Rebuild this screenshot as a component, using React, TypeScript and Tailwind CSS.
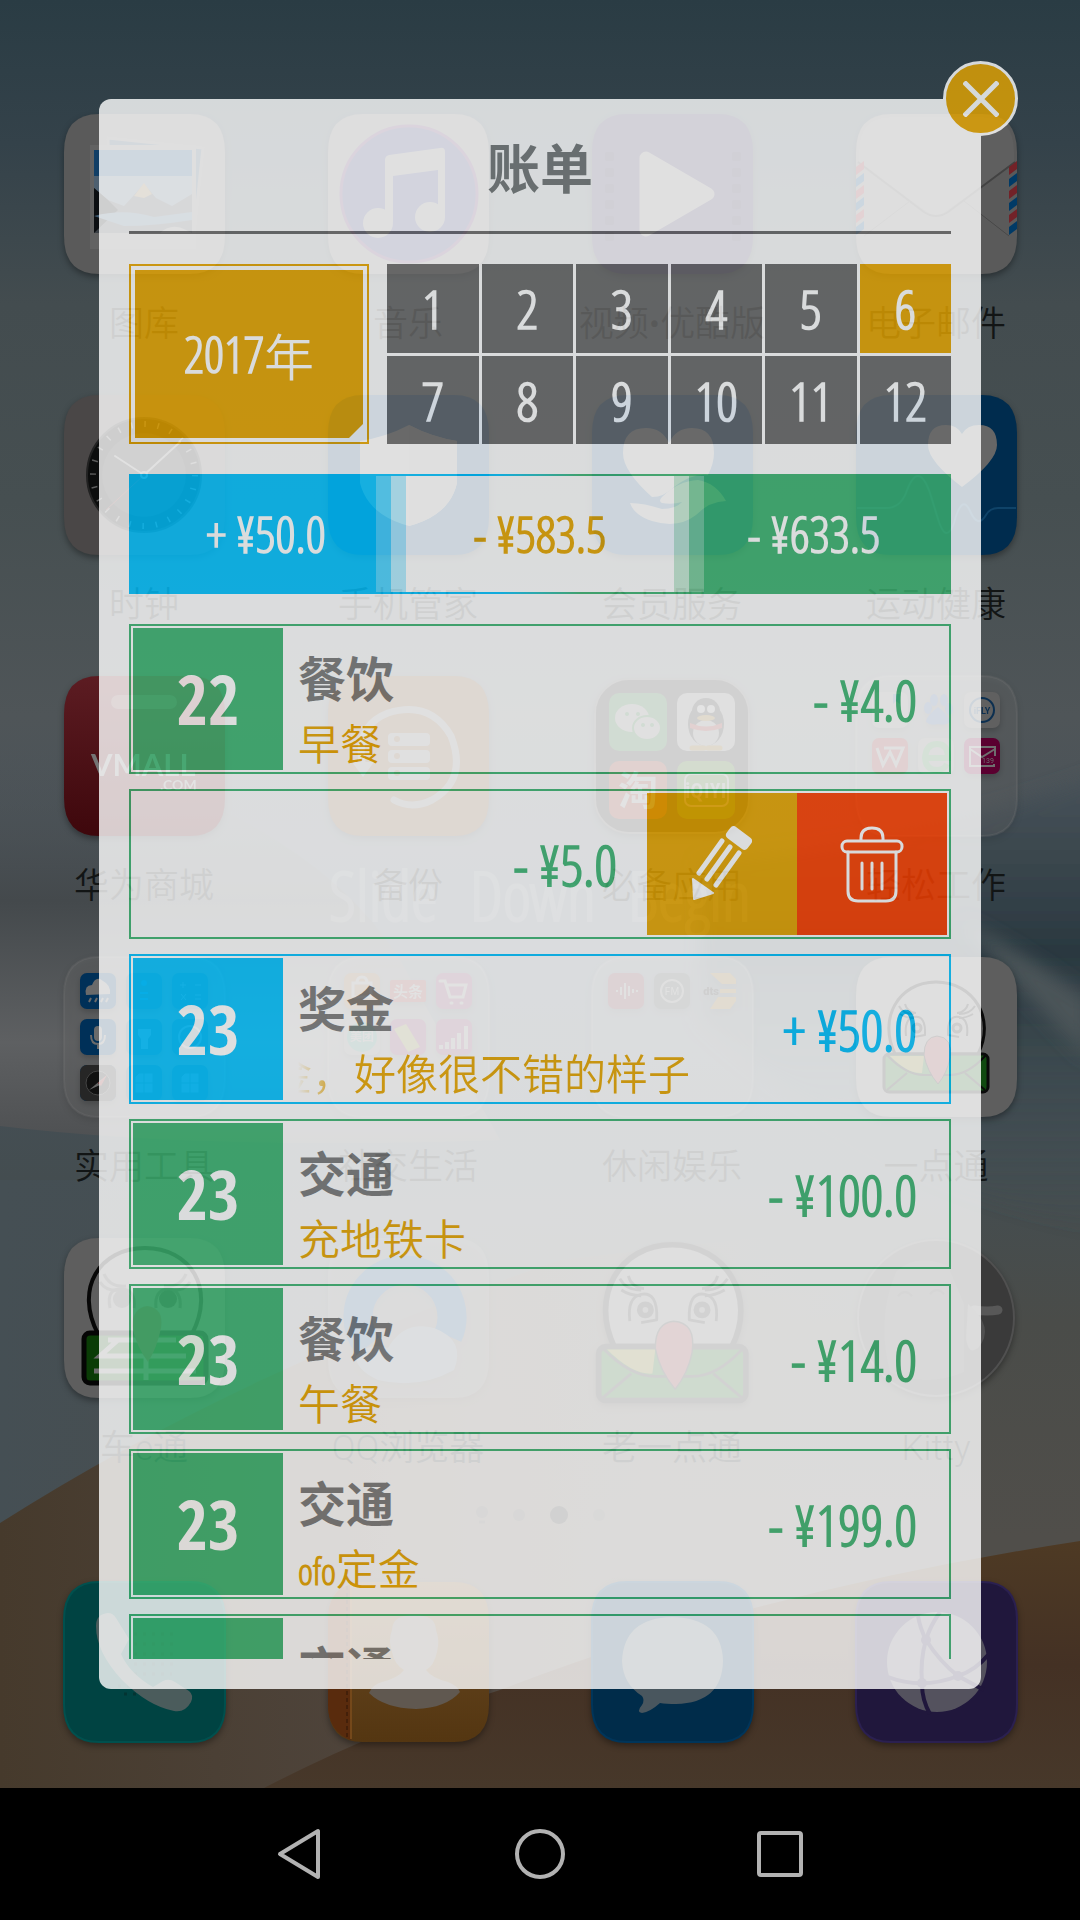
import type { ReactNode } from "react";

/* ---------- Launcher icons ---------- */

function Plate({ fill, stroke = "none" }: { fill: string; stroke?: string }) {
  return (
    <path
      d="M35 0H126Q161 0 161 38V122Q161 160 126 160H35Q0 160 0 122V38Q0 0 35 0Z"
      fill={fill}
      stroke={stroke}
      strokeWidth="2"
    />
  );
}

function Icon({ children }: { children: ReactNode }) {
  return (
    <svg
      viewBox="0 0 161 160"
      className="h-40 w-[161px] overflow-visible drop-shadow-[0_3px_3px_rgba(0,0,0,0.35)]"
      aria-hidden="true"
    >
      {children}
    </svg>
  );
}

function GalleryIcon() {
  return (
    <Icon>
      <Plate fill="#5a5a5a" />
      <path d="M44 24L139 34L130 120L45 110Z" fill="#2c4458" stroke="#626262" strokeWidth="3" />
      <rect x="26" y="31" width="106" height="104" fill="#626262" />
      <rect x="30" y="36" width="98" height="83" fill="#123f66" />
      <rect x="30" y="62" width="98" height="30" fill="#4e6070" />
      <path d="M30 74L44 86L60 92L80 70L92 84L108 92L128 80V119H30Z" fill="#3a3f44" />
      <path d="M30 74L44 86L54 96L30 119Z" fill="#0c0f12" />
      <path d="M70 82L80 69L88 80L80 84Z" fill="#7a6440" />
      <path d="M30 102Q60 94 90 103L128 98V106Q90 112 60 112Z" fill="#3f5a70" />
      <path d="M96 119Q108 108 122 116L128 119Z" fill="#666" />
    </Icon>
  );
}

function MusicIcon() {
  return (
    <Icon>
      <Plate fill="#5a5a5a" />
      <circle cx="81" cy="80" r="68" fill="#232a5c" stroke="#4a2a58" strokeWidth="3" />
      <path
        d="M57 46Q57 42 61 41L112 34Q117 33 117 38V104H110V56L65 62V108H57Z"
        fill="#666"
      />
      <circle cx="50" cy="109" r="15" fill="#666" />
      <circle cx="102" cy="103" r="15" fill="#666" />
    </Icon>
  );
}

function VideoIcon() {
  return (
    <Icon>
      <Plate fill="#251f42" />
      {[38, 54, 70, 86, 102, 118].map((y) => (
        <g key={y} fill="#1b1634">
          <rect x="13" y={y} width="9" height="9" rx="2" />
          <rect x="140" y={y} width="9" height="9" rx="2" />
        </g>
      ))}
      <path
        d="M54 44L116 80L54 116Z"
        fill="#666"
        stroke="#666"
        strokeWidth="13"
        strokeLinejoin="round"
      />
    </Icon>
  );
}

function MailIcon() {
  return (
    <Icon>
      <Plate fill="#5a5a5a" />
      <path d="M3 50L80 104L158 50V38Q158 3 126 3H35Q3 3 3 38Z" fill="#5f5f5f" />
      <path d="M2 48L68 98Q80 106 92 98L159 48" fill="none" stroke="#424242" strokeWidth="2" />
      <path d="M8 122L54 87M153 122L108 87" stroke="#484848" strokeWidth="1" />
      {[0, 153].map((x) => (
        <g key={x}>
          {[48, 60, 72, 84, 96, 108].map((y, i) => (
            <path
              key={y}
              d={`M${x} ${y + 5}L${x + 8} ${y - 1}V${y + 7}L${x} ${y + 13}Z`}
              fill={i % 2 ? "#003a66" : "#722228"}
            />
          ))}
        </g>
      ))}
    </Icon>
  );
}

function ClockIcon() {
  return (
    <Icon>
      <Plate fill="#4a4747" />
      <circle cx="80" cy="80" r="57" fill="#0c0d0d" stroke="#222" strokeWidth="2" />
      <circle cx="80" cy="80" r="42" fill="#1a1a1a" />
      <circle
        cx="80"
        cy="80"
        r="51"
        fill="none"
        stroke="#5c5c5c"
        strokeWidth="6"
        strokeDasharray="1.5 11.85"
      />
      <path d="M80 80L51 61M80 80L116 47" stroke="#6a6a6a" strokeWidth="2" strokeLinecap="round" />
      <path d="M80 80L42 115" stroke="#5a1c1c" strokeWidth="1" />
      <circle cx="80" cy="80" r="3" fill="#222" stroke="#6a6a6a" strokeWidth="2" />
    </Icon>
  );
}

function ShieldIcon() {
  return (
    <Icon>
      <Plate fill="#002c52" />
      <path d="M81 30Q104 42 129 46V88Q122 120 81 131Q40 120 32 88V46Q58 42 81 30Z" fill="#666" />
      <path d="M81 30Q104 42 129 46V88Q122 120 81 131Z" fill="#606060" />
    </Icon>
  );
}

function MemberIcon() {
  return (
    <Icon>
      <Plate fill="#002c52" />
      <path
        d="M60 102Q31 76 31 58Q31 33 54 33Q70 33 77 48Q84 33 100 33Q122 33 122 58Q122 68 116 80Q100 78 82 92Q72 102 60 102Z"
        fill="#666"
      />
      <path
        d="M38 108Q52 108 70 114Q84 114 90 107Q80 110 70 108Q66 106 70 102Q86 86 106 85Q124 88 134 106Q118 106 104 120Q86 134 60 126Q42 120 38 108Z"
        fill="#666"
      />
    </Icon>
  );
}

function HealthIcon() {
  return (
    <Icon>
      <Plate fill="#002c4e" />
      <path
        d="M106 92Q72 66 72 50Q72 30 90 30Q101 30 106 39Q111 30 123 30Q141 30 141 50Q141 66 106 92Z"
        fill="#666"
      />
      <path
        d="M1 113H30Q44 113 50 98Q62 64 74 98L82 124Q90 150 98 128Q106 98 114 116Q122 134 130 120Q134 113 142 113H160"
        fill="none"
        stroke="#0f4368"
        strokeWidth="2"
      />
    </Icon>
  );
}

function VmallIcon() {
  return (
    <Icon>
      <defs>
        <linearGradient id="vmall" x1="0" y1="0" x2="0" y2="1">
          <stop offset="0" stopColor="#5c1c22" />
          <stop offset="1" stopColor="#3e070c" />
        </linearGradient>
      </defs>
      <Plate fill="url(#vmall)" />
      <rect x="47" y="19" width="66" height="14" rx="7" fill="#6a4044" />
      <text
        x="27"
        y="100"
        fontFamily="Lato"
        fontSize="31"
        fontWeight="700"
        fill="#747474"
      >
        VMALL
      </text>
      <text x="96" y="114" fontFamily="Lato" fontSize="14" fontWeight="700" fill="#747474">
        .COM
      </text>
    </Icon>
  );
}

function BackupIcon() {
  return (
    <Icon>
      <Plate fill="#5a3c20" />
      <path
        d="M35 92Q26 50 60 37Q102 24 123 60Q140 104 104 124Q84 134 66 124"
        fill="none"
        stroke="#666"
        strokeWidth="7"
        strokeLinecap="round"
      />
      <path d="M24 86H46L35 101Z" fill="#666" />
      {[57, 74, 91].map((y) => (
        <g key={y}>
          <rect x="60" y={y} width="42" height="13" rx="4" fill="#666" />
          <circle cx="69" cy={y + 6} r="3" fill="#5a3c20" />
        </g>
      ))}
    </Icon>
  );
}

function EssentialsFolderIcon() {
  return (
    <Icon>
      <rect x="3" y="3" width="154" height="154" rx="34" fill="#1a1a1a" stroke="#4a4a4a" strokeWidth="2" />
      <rect x="17" y="17" width="58" height="58" rx="10" fill="#1c5024" />
      <ellipse cx="40" cy="42" rx="17" ry="14" fill="#666" />
      <ellipse cx="55" cy="52" rx="14" ry="12" fill="#666" stroke="#1c5024" strokeWidth="2" />
      <circle cx="35" cy="38" r="2" fill="#1c5024" />
      <circle cx="46" cy="38" r="2" fill="#1c5024" />
      <circle cx="51" cy="49" r="2" fill="#1c5024" />
      <circle cx="60" cy="49" r="2" fill="#1c5024" />
      <rect x="85" y="17" width="58" height="58" rx="10" fill="#646464" />
      <ellipse cx="114" cy="48" rx="18" ry="22" fill="#161616" />
      <circle cx="114" cy="36" r="14" fill="#161616" />
      <ellipse cx="114" cy="57" rx="13" ry="13" fill="#646464" />
      <circle cx="109" cy="33" r="4" fill="#777" />
      <circle cx="119" cy="33" r="4" fill="#777" />
      <ellipse cx="114" cy="42" rx="9" ry="3" fill="#6b4d12" />
      <path d="M98 47Q114 54 130 47V52Q114 58 98 52Z" fill="#701c1c" />
      <path d="M100 72H112M116 72H128" stroke="#6b4d12" strokeWidth="5" strokeLinecap="round" />
      <rect x="17" y="85" width="58" height="58" rx="10" fill="#6a2018" />
      <text x="46" y="129" textAnchor="middle" fontFamily="Noto Sans CJK SC" fontSize="40" fontWeight="700" fill="#727272">
        淘
      </text>
      <rect x="85" y="85" width="58" height="58" rx="10" fill="#2c5210" />
      <rect x="93" y="98" width="43" height="32" rx="6" fill="none" stroke="#727272" strokeWidth="2" />
      <text x="114" y="122" textAnchor="middle" fontFamily="Open Sans Condensed" fontSize="22" fontWeight="700" fill="#727272">
        iQIYI
      </text>
    </Icon>
  );
}

function WorkFolderIcon() {
  return (
    <Icon>
      <Plate fill="rgba(120,120,120,0.25)" stroke="rgba(120,120,120,0.25)" />
      <rect x="16" y="16" width="36" height="36" rx="7" fill="#606060" />
      <path d="M37 18H44V28L40 25L37 28Z" fill="#234464" />
      <g fill="#2c4674">
        <ellipse cx="72" cy="32" rx="4" ry="6" />
        <ellipse cx="78" cy="24" rx="4" ry="6" />
        <ellipse cx="88" cy="24" rx="4" ry="6" />
        <ellipse cx="93" cy="33" rx="4" ry="6" />
        <path d="M70 46Q70 40 82 31Q94 40 94 46Q90 50 82 48Q74 50 70 46Z" />
      </g>
      <rect x="108" y="16" width="36" height="36" rx="7" fill="#606060" />
      <circle cx="126" cy="34" r="12" fill="none" stroke="#0c2f50" strokeWidth="2" />
      <text x="126" y="38" textAnchor="middle" fontFamily="Roboto" fontSize="9" fontWeight="700" fill="#0c2f50">
        iFLY
      </text>
      <rect x="16" y="62" width="36" height="36" rx="7" fill="#6b1c20" />
      <path d="M21 72L27 89L34 76L40 89L47 72H28" fill="none" stroke="#6c6c6c" strokeWidth="3" />
      <rect x="62" y="62" width="36" height="36" rx="7" fill="#606060" />
      <path d="M70 82H92Q92 68 81 68Q70 68 69 82Q70 94 81 94Q88 94 91 88" fill="none" stroke="#2f6a3a" strokeWidth="6" />
      <rect x="108" y="62" width="36" height="36" rx="7" fill="#5a0030" />
      <path d="M138 88V90H114V71H139V80M114 73L126 81L139 73" fill="none" stroke="#6e6e6e" strokeWidth="2" />
      <text x="132" y="87" textAnchor="middle" fontFamily="Roboto" fontSize="7" fill="#6e6e6e">
        139
      </text>
    </Icon>
  );
}

function ToolsFolderIcon() {
  return (
    <Icon>
      <Plate fill="rgba(120,120,120,0.25)" stroke="rgba(120,120,120,0.25)" />
      {[16, 62, 108].map((y) =>
        [16, 62, 108].map((x) => (
          <rect key={`${x}-${y}`} x={x} y={y} width="36" height="36" rx="7" fill={x === 16 ? "#003058" : "#2c4656"} />
        ))
      )}
      <path d="M22 38Q20 28 28 28Q32 18 39 24Q47 28 46 37Z" fill="#6a6a6a" />
      <path d="M27 41L25 45M33 41L31 45M39 41L37 45M44 41L42 45" stroke="#6a6a6a" strokeWidth="2" />
      <rect x="30" y="69" width="8" height="15" rx="4" fill="#6a6a6a" />
      <path d="M27 78Q27 87 34 87Q41 87 41 78M34 87V92" fill="none" stroke="#6a6a6a" strokeWidth="2" />
      <rect x="16" y="108" width="36" height="36" rx="7" fill="#262626" />
      <circle cx="34" cy="126" r="12" fill="#111" stroke="#444" />
      <path d="M25 133L43 118L36 128Z" fill="#666" />
      <path d="M43 118L34 126L37 129Z" fill="#7a2020" />
      <circle cx="80" cy="26" r="3" fill="#1c5a80" />
      <path d="M76 36H84M76 42H84" stroke="#1c5a80" strokeWidth="2" />
      <path d="M74 72H87V78L84 82V92H77V82L74 78Z" fill="#5a6a78" />
      <circle cx="126" cy="80" r="11" fill="none" stroke="#5a6a78" strokeWidth="2" />
      <path d="M116 28H122M119 25V31M131 28H137M117 37L122 43M122 37L117 43M131 38H137M131 42H137" stroke="#5a6a78" strokeWidth="1" />
      {[71, 117].map((x) => (
        <path
          key={x}
          d={`M${x + 4} 116H${x + 18}V136H${x}V120ZM${x} 126H${x + 18}M${x + 9} 116V136`}
          fill="#4a6274"
          stroke="#2c4656"
        />
      ))}
    </Icon>
  );
}

function SocialFolderIcon() {
  return (
    <Icon>
      <Plate fill="rgba(120,120,120,0.25)" stroke="rgba(120,120,120,0.25)" />
      <rect x="16" y="16" width="36" height="36" rx="7" fill="#6a4c30" />
      <path d="M25 26H43V40H25ZM29 26Q29 20 34 20Q39 20 39 26" fill="none" stroke="#6e6e6e" strokeWidth="3" />
      <rect x="62" y="23" width="36" height="22" rx="2" fill="#702828" />
      <text x="80" y="40" textAnchor="middle" fontFamily="Noto Sans CJK SC" fontSize="15" fontWeight="700" fill="#707070">
        头条
      </text>
      <rect x="108" y="16" width="36" height="36" rx="7" fill="#622c4a" />
      <path d="M112 24H117L122 40H135L138 28H119M123 46H124M133 46H134" fill="none" stroke="#707070" strokeWidth="3" strokeLinecap="round" />
      <rect x="16" y="62" width="36" height="36" rx="7" fill="#606060" />
      <circle cx="34" cy="80" r="15" fill="#30665c" />
      <text x="34" y="84" textAnchor="middle" fontFamily="Noto Sans CJK SC" fontSize="12" fontWeight="700" fill="#707070">
        美团
      </text>
      <rect x="62" y="62" width="36" height="36" rx="7" fill="#622c4a" />
      <path d="M66 72L78 67L92 90L80 95Z" fill="#6a6a34" />
      <rect x="108" y="62" width="36" height="36" rx="7" fill="#622c4a" />
      <path d="M113 92V88M119 92V85M125 92V81M131 92V76M138 92V69" stroke="#707070" strokeWidth="4" />
    </Icon>
  );
}

function FunFolderIcon() {
  return (
    <Icon>
      <Plate fill="rgba(120,120,120,0.25)" stroke="rgba(120,120,120,0.25)" />
      <rect x="16" y="16" width="36" height="36" rx="7" fill="#582430" />
      <path d="M24 34H26M29 30V38M33 26V42M37 29V39M41 32V36M44 34H46" stroke="#6c6c6c" strokeWidth="2" />
      <rect x="62" y="16" width="36" height="36" rx="7" fill="#323a3a" />
      <circle cx="80" cy="34" r="11" fill="none" stroke="#666" strokeWidth="2" />
      <text x="80" y="38" textAnchor="middle" fontFamily="Roboto" fontSize="10" fill="#6c6c6c">
        FM
      </text>
      <path d="M118 16H138L144 22V27H130ZM128 32H144V36H128ZM126 40H144V44L138 52H118Z" fill="#70501c" />
      <text x="119" y="38" textAnchor="middle" fontFamily="Roboto" fontSize="11" fontWeight="900" fill="#111">
        dts
      </text>
    </Icon>
  );
}

function Bird({ color, line }: { color: string; line: string }) {
  return (
    <g stroke={color} strokeWidth={line} strokeLinejoin="round">
      <path d="M39 97C22 62 42 25 80 25C118 25 140 62 122 97Z" fill="#606060" />
      <g fill="none" strokeWidth="2">
        <path d="M43 49Q47 57 58 57M44 57Q50 61 58 61M49 47Q51 55 60 56M119 49Q114 57 103 57M117 57Q110 61 103 61M112 47Q110 55 101 56" />
        <path d="M50 79Q48 62 58 60Q70 58 69 78L58 80M111 79Q113 62 103 60Q91 58 92 78L103 80" />
      </g>
      <circle cx="61" cy="71" r="4" fill="#555" />
      <circle cx="101" cy="71" r="4" fill="#555" />
      <rect x="28" y="97" width="104" height="38" rx="5" fill="#104a10" />
      <path d="M31 98Q50 118 68 118H94Q112 118 130 98M31 133L51 116M129 133L109 116" fill="none" strokeWidth="2" />
      <path d="M34 99Q52 117 66 116L68 99Z" fill="#6a6420" stroke="none" />
      <path d="M81 79Q97 80 94 101Q91 116 82 127Q71 114 68 98Q68 80 81 79Z" fill="#6e2c30" strokeWidth="1" />
    </g>
  );
}

function BirdIcon() {
  return (
    <Icon>
      <Plate fill="#5e5e5e" />
      <Bird color="#0a0a0a" line="3" />
    </Icon>
  );
}

function OldBirdIcon() {
  return (
    <Icon>
      <svg x="-33" y="-29" width="228" height="206" viewBox="0 0 161 145" overflow="visible">
        <Bird color="#222" line="4" />
      </svg>
    </Icon>
  );
}

function CarIcon() {
  return (
    <Icon>
      <Plate fill="#5e5e5e" />
      <path d="M34 96C10 50 36 10 81 10C126 10 152 50 128 96Z" fill="#5e5e5e" stroke="#070707" strokeWidth="4" />
      <g fill="none" stroke="#333" strokeWidth="3">
        <path d="M36 44Q42 54 58 52M40 36Q46 50 62 48M126 44Q120 54 104 52M122 36Q116 50 100 48" />
        <path d="M46 70Q42 50 58 51Q72 52 70 70M92 70Q90 52 104 51Q118 52 116 70" />
      </g>
      <circle cx="58" cy="61" r="9" fill="#333" />
      <circle cx="104" cy="61" r="9" fill="#222" />
      <rect x="20" y="95" width="122" height="50" rx="6" fill="#0a3c06" stroke="#050505" strokeWidth="5" />
      <path d="M44 102H112M54 102L36 118H122M82 110V142M30 133H132" fill="none" stroke="#6c6c6c" strokeWidth="5" />
      <path d="M83 68Q100 70 97 90Q93 110 84 124Q72 108 68 88Q69 70 83 68Z" fill="#5c3a2c" />
    </Icon>
  );
}

function QQBrowserIcon() {
  return (
    <Icon>
      <Plate fill="rgba(100,100,100,0.5)" />
      <path d="M40 108A47 47 0 1 1 120 98" fill="none" stroke="#16406c" strokeWidth="29" />
      <path d="M28 118Q40 104 60 110Q76 82 106 90Q138 102 126 132Q90 152 50 142Q28 132 28 118Z" fill="#58626c" />
    </Icon>
  );
}

function KittyIcon() {
  return (
    <Icon>
      <circle cx="80" cy="80" r="78" fill="#3a3a3a" stroke="#505050" strokeWidth="2" />
      <path d="M34 134Q20 80 40 34Q60 14 92 28L108 66V134Q70 150 34 134Z" fill="#424242" />
      <path d="M42 58Q49 50 56 58M74 56Q81 48 88 56" fill="none" stroke="#333" strokeWidth="2" />
      <path d="M118 72Q132 74 142 72" fill="none" stroke="#585858" strokeWidth="9" strokeLinecap="round" />
      <path d="M112 66Q140 90 122 110Q112 118 110 100Z" fill="#505050" />
    </Icon>
  );
}

function PhoneIcon() {
  return (
    <Icon>
      <Plate fill="#004342" stroke="#00504e" />
      <path
        d="M70 52H114M70 62H114M70 72H114M70 82H114M70 92H108M54 104H84M60 112H86"
        stroke="#033432"
        strokeWidth="3"
        strokeDasharray="3 6"
      />
      <path
        d="M32 44Q32 32 44 31Q49 31 52 36L65 57L57 72Q66 92 89 105L99 99Q105 96 111 100L125 109Q130 113 127 120Q121 131 110 129Q84 124 58 98Q32 70 32 44Z"
        fill="#4b5c5c"
      />
    </Icon>
  );
}

function ContactsIcon() {
  return (
    <Icon>
      <defs>
        <linearGradient id="contacts" x1="0" y1="0" x2="0" y2="1">
          <stop offset="0" stopColor="#6a4a24" />
          <stop offset="1" stopColor="#543611" />
        </linearGradient>
      </defs>
      <Plate fill="url(#contacts)" />
      <path d="M23 2V158Q0 150 0 122V38Q0 8 23 2Z" fill="#592b0d" />
      <path d="M19 4V156" stroke="#2e1608" strokeDasharray="4 3" />
      <path d="M23 3V157" stroke="#74481a" strokeWidth="2" />
      <path
        d="M64 48Q64 33 86 33Q108 33 108 48Q112 58 109 70Q106 84 98 88Q104 96 120 100Q130 104 132 110Q118 126 88 127Q56 126 41 111Q44 103 54 100Q70 96 76 88Q66 82 64 70Q60 58 64 48Z"
        fill="#605850"
      />
    </Icon>
  );
}

function MessagesIcon() {
  return (
    <Icon>
      <Plate fill="#002c4a" stroke="#00355a" />
      <path
        d="M80 35Q130 36 131 79Q130 121 84 122Q74 122 68 121Q58 130 50 131Q44 130 50 123Q53 118 50 114Q31 102 30 79Q32 36 80 35Z"
        fill="#49565e"
      />
    </Icon>
  );
}

function BrowserIcon() {
  return (
    <Icon>
      <Plate fill="#20173c" stroke="#2b2050" />
      <circle cx="81" cy="80" r="50" fill="#54525e" />
      <g fill="none" stroke="#20173c" strokeWidth="4">
        <path d="M62 34Q64 46 70 58Q84 80 102 94L128 108" />
        <path d="M84 30Q74 44 70 58Q64 78 66 102Q66 118 74 132" />
        <path d="M32 95Q66 108 102 94Q120 88 132 73" />
      </g>
      <circle cx="70" cy="58" r="5" fill="#20173c" />
      <circle cx="102" cy="94" r="5" fill="#20173c" />
      <circle cx="66" cy="101" r="5" fill="#20173c" />
    </Icon>
  );
}

/* ---------- Home screen ---------- */

const apps: { label: string; icon: ReactNode }[] = [
  { label: "图库", icon: <GalleryIcon /> },
  { label: "音乐", icon: <MusicIcon /> },
  { label: "视频•优酷版", icon: <VideoIcon /> },
  { label: "电子邮件", icon: <MailIcon /> },
  { label: "时钟", icon: <ClockIcon /> },
  { label: "手机管家", icon: <ShieldIcon /> },
  { label: "会员服务", icon: <MemberIcon /> },
  { label: "运动健康", icon: <HealthIcon /> },
  { label: "华为商城", icon: <VmallIcon /> },
  { label: "备份", icon: <BackupIcon /> },
  { label: "必备应用", icon: <EssentialsFolderIcon /> },
  { label: "轻松工作", icon: <WorkFolderIcon /> },
  { label: "实用工具", icon: <ToolsFolderIcon /> },
  { label: "社交生活", icon: <SocialFolderIcon /> },
  { label: "休闲娱乐", icon: <FunFolderIcon /> },
  { label: "一点通", icon: <BirdIcon /> },
  { label: "车e通", icon: <CarIcon /> },
  { label: "QQ浏览器", icon: <QQBrowserIcon /> },
  { label: "老一点通", icon: <OldBirdIcon /> },
  { label: "Kitty", icon: <KittyIcon /> },
];

function Wallpaper() {
  return (
    <svg
      viewBox="0 0 1080 1788"
      preserveAspectRatio="none"
      className="absolute inset-0 h-full w-full"
      aria-hidden="true"
    >
      <defs>
        <linearGradient id="sky" x1="0" y1="0" x2="0" y2="1">
          <stop offset="0" stopColor="#2a3c44" />
          <stop offset="0.08" stopColor="#34424a" />
          <stop offset="0.17" stopColor="#434c4f" />
          <stop offset="0.28" stopColor="#464f51" />
          <stop offset="0.4" stopColor="#4f5558" />
          <stop offset="0.55" stopColor="#45505a" />
          <stop offset="0.66" stopColor="#444d50" />
          <stop offset="0.74" stopColor="#4a4c49" />
          <stop offset="0.86" stopColor="#504e4a" />
        </linearGradient>
        <linearGradient id="silk" x1="0" y1="0" x2="0" y2="1">
          <stop offset="0" stopColor="#4f5558" stopOpacity="0" />
          <stop offset="0.4" stopColor="#44494c" />
          <stop offset="0.75" stopColor="#5e6062" />
          <stop offset="1" stopColor="#4e5052" />
        </linearGradient>
        <linearGradient id="fold" x1="0" y1="0" x2="0" y2="1">
          <stop offset="0" stopColor="#4b555b" />
          <stop offset="0.4" stopColor="#2a3840" />
          <stop offset="0.6" stopColor="#3a474d" />
          <stop offset="1" stopColor="#434e52" stopOpacity="0" />
        </linearGradient>
        <linearGradient id="dune" x1="0" y1="0" x2="1" y2="0">
          <stop offset="0" stopColor="#463a2c" />
          <stop offset="0.4" stopColor="#50463e" />
          <stop offset="0.8" stopColor="#504c48" stopOpacity="0" />
        </linearGradient>
        <linearGradient id="steel" x1="0" y1="0" x2="1" y2="0">
          <stop offset="0" stopColor="#454f54" />
          <stop offset="0.6" stopColor="#454f54" stopOpacity="0" />
        </linearGradient>
        <linearGradient id="front" x1="0" y1="0" x2="0" y2="1">
          <stop offset="0" stopColor="#4e3a24" />
          <stop offset="0.5" stopColor="#443124" />
          <stop offset="1" stopColor="#47382a" />
        </linearGradient>
        <filter id="soft" x="-10%" y="-10%" width="120%" height="120%">
          <feGaussianBlur stdDeviation="9" />
        </filter>
      </defs>
      <rect width="1080" height="1788" fill="url(#sky)" />
      <rect y="1180" width="1080" height="400" fill="url(#steel)" />
      <path d="M0 740Q300 800 400 960L500 1140Q200 1150 0 1126Z" fill="url(#silk)" />
      <path d="M700 860Q900 850 1140 760V1240Q900 1200 700 1020Z" fill="url(#fold)" filter="url(#soft)" />
      <path d="M960 920Q1020 990 1090 1060V1000Q1020 950 960 920Z" fill="#4c5459" filter="url(#soft)" />
      <path d="M0 1523Q240 1370 560 1260L1080 1200V1788H0Z" fill="url(#dune)" />
      <path d="M264 1788Q380 1728 500 1690Q760 1590 1080 1541V1788Z" fill="url(#front)" />
    </svg>
  );
}

function HomeScreen() {
  return (
    <div className="relative flex flex-1 flex-col px-3 pt-[114px] pb-[46px]">
      <Wallpaper />
      <ul className="relative grid grid-cols-4 gap-y-[45px]">
        {apps.map((app) => (
          <li key={app.label} className="flex flex-col items-center gap-[26px]">
            {app.icon}
            <span className="font-['Roboto','Noto_Sans_CJK_SC',sans-serif] text-[35px] leading-[50px] font-[350] whitespace-nowrap text-[#121515]">
              {app.label}
            </span>
          </li>
        ))}
      </ul>
      <div className="relative mt-8 flex h-[18px] items-center justify-center gap-[25px]">
        <svg viewBox="0 0 12 18" className="h-[18px] w-3" aria-hidden="true">
          <circle cx="6" cy="6" r="6" fill="#3c3a38" />
          <path d="M3 16H9" stroke="#3c3a38" strokeWidth="3" />
        </svg>
        <span className="h-3 w-3 rounded-full bg-[#3c3a38]" />
        <span className="h-[18px] w-[18px] rounded-full bg-[#1c1b1a]" />
        <span className="h-3 w-3 rounded-full bg-[#44423f]" />
      </div>
      <ul className="relative mt-[58px] grid grid-cols-4 justify-items-center">
        <li><PhoneIcon /></li>
        <li><ContactsIcon /></li>
        <li><MessagesIcon /></li>
        <li><BrowserIcon /></li>
      </ul>
      <p className="absolute inset-x-0 top-[850px] flex justify-center gap-8 font-['Open_Sans_Condensed_Light',sans-serif] text-[68px] leading-[90px] font-bold text-white/10">
        <span>Slide</span>
        <span>Down</span>
        <span>Begin</span>
      </p>
    </div>
  );
}

/* ---------- Bill dialog ---------- */

type Kind = "income" | "expense";

interface Bill {
  id: number;
  day: number;
  category: string;
  note: ReactNode;
  amount: string;
  kind: Kind;
  open?: boolean;
  scrolling?: boolean;
}

const bills: Bill[] = [
  { id: 1, day: 22, category: "餐饮", note: "早餐", amount: "- ¥4.0", kind: "expense" },
  { id: 2, day: 22, category: "", note: "", amount: "- ¥5.0", kind: "expense", open: true },
  {
    id: 3,
    day: 23,
    category: "奖金",
    note: "奖金，好像很不错的样子",
    amount: "+ ¥50.0",
    kind: "income",
    scrolling: true,
  },
  { id: 4, day: 23, category: "交通", note: "充地铁卡", amount: "- ¥100.0", kind: "expense" },
  { id: 5, day: 23, category: "餐饮", note: "午餐", amount: "- ¥14.0", kind: "expense" },
  {
    id: 6,
    day: 23,
    category: "交通",
    note: (
      <>
        <span className="font-['Open_Sans_Condensed_Light',sans-serif] text-[36px] font-bold">ofo</span>
        定金
      </>
    ),
    amount: "- ¥199.0",
    kind: "expense",
  },
  { id: 7, day: 23, category: "交通", note: "", amount: "", kind: "expense" },
];

const months = [1, 2, 3, 4, 5, 6, 7, 8, 9, 10, 11, 12];

function PencilIcon() {
  return (
    <svg viewBox="0 0 60 76" className="h-[76px] w-[60px]" fill="#fff" aria-hidden="true">
      <rect x="34" y="5" width="26" height="14" rx="4" transform="rotate(37 47 12)" />
      <path
        d="M30 15L7 47M38 21L15 53M47 27L24 59"
        stroke="#fff"
        strokeWidth="5"
        strokeLinecap="round"
      />
      <path d="M1 53L21 67L2 73Z" stroke="#fff" strokeWidth="2" strokeLinejoin="round" />
    </svg>
  );
}

function TrashIcon() {
  return (
    <svg
      viewBox="0 0 64 78"
      className="h-[78px] w-16"
      fill="none"
      stroke="#fff"
      strokeWidth="3"
      strokeLinecap="round"
      aria-hidden="true"
    >
      <path d="M21 15V13Q21 3 32 3Q43 3 43 13V15" />
      <rect x="2" y="16" width="60" height="11" rx="5" />
      <path d="M8 27V66Q8 76 18 76H46Q56 76 56 66V27" />
      <path d="M22 38V64M32 38V64M42 38V64" />
    </svg>
  );
}

function BillRow({ bill }: { bill: Bill }) {
  const income = bill.kind === "income";
  return (
    <li
      className={`flex h-[150px] shrink-0 border-2 p-0.5 ${
        income ? "border-[#03c2ff]" : "border-[#3eb572]"
      }`}
    >
      {!bill.open && (
        <>
          <div
            className={`flex w-[150px] shrink-0 items-center justify-center font-['Open_Sans_Condensed',sans-serif] text-[68px] leading-[142px] font-bold text-white ${
              income ? "bg-[#03c2ff]" : "bg-[#3eb572]"
            }`}
          >
            {bill.day}
          </div>
          <div className="flex flex-col pt-[18px] pl-[15px] font-['Noto_Sans_CJK_SC',sans-serif] whitespace-nowrap">
            <h3 className="text-[48px] leading-[60px] font-bold text-[#7a7a7a]">{bill.category}</h3>
            {bill.scrolling ? (
              <p className="mt-2 flex w-[392px] justify-end overflow-hidden text-[42px] leading-[56px] font-[350] text-[#e7a600] [mask-image:linear-gradient(to_right,transparent,black_40px)]">
                {bill.note}
              </p>
            ) : (
              <p className="mt-2 text-[42px] leading-[56px] font-[350] text-[#e7a600]">{bill.note}</p>
            )}
          </div>
        </>
      )}
      <output
        className={`ml-auto flex items-center pr-[30px] font-['Open_Sans_Condensed_Light',sans-serif] text-[56px] font-bold whitespace-pre ${
          income ? "text-[#03c2ff]" : "text-[#3eb572]"
        }`}
      >
        {bill.amount}
      </output>
      {bill.open && (
        <div className="flex shrink-0">
          <button
            type="button"
            aria-label="编辑"
            className="flex w-[150px] items-center justify-center bg-[#e7a600]"
          >
            <PencilIcon />
          </button>
          <button
            type="button"
            aria-label="删除"
            className="flex w-[150px] items-center justify-center bg-[#fc4000]"
          >
            <TrashIcon />
          </button>
        </div>
      )}
    </li>
  );
}

function BillDialog() {
  return (
    <div
      role="dialog"
      aria-labelledby="bill-title"
      className="relative flex h-full w-full flex-col rounded-xl bg-white px-[30px] pb-[30px] opacity-80"
    >
      <h2
        id="bill-title"
        className="border-b-[3px] border-[#6b6b6b] pt-8 pb-[30px] text-center font-['Noto_Sans_CJK_SC',sans-serif] text-[53px] leading-[70px] font-bold text-[#767a7a]"
      >
        账单
      </h2>

      <div className="mt-[30px] flex h-[180px] shrink-0 gap-[18px] font-['Open_Sans_Condensed_Light',sans-serif] font-bold">
        <div className="w-60 shrink-0 border-2 border-[#e7a600] p-1">
          <button
            type="button"
            className="flex h-full w-full items-center justify-center bg-[#e7a600] text-[50px] text-white [clip-path:polygon(0_0,100%_0,100%_calc(100%-14px),calc(100%-14px)_100%,0_100%)]"
          >
            2017
            <span className="font-['Noto_Sans_CJK_SC',sans-serif] font-[350]">年</span>
          </button>
        </div>
        <div className="grid flex-1 grid-cols-6 gap-[3px]">
          {months.map((month) => (
            <button
              key={month}
              type="button"
              aria-pressed={month === 6}
              className={`flex items-center justify-center text-[54px] leading-[60px] text-white ${
                month === 6 ? "bg-[#e7a600]" : "bg-[#6b6b6b]"
              }`}
            >
              {month}
            </button>
          ))}
        </div>
      </div>

      <div className="relative mt-[30px] h-[120px] shrink-0 bg-linear-to-r from-[#03c2ff] from-45% to-[#3eb572] to-55% p-0.5">
        <div className="flex h-full justify-between bg-white">
          <div className="flex">
            <div className="w-[245px] bg-[#03c2ff]" />
            <div className="w-[15px] bg-[#03c2ff]/70" />
            <div className="w-[15px] bg-[#03c2ff]/30" />
          </div>
          <div className="flex">
            <div className="w-[15px] bg-[#3eb572]/30" />
            <div className="w-[15px] bg-[#3eb572]/70" />
            <div className="w-[245px] bg-[#3eb572]" />
          </div>
        </div>
        <div className="absolute inset-0 grid grid-cols-3 items-center justify-items-center font-['Open_Sans_Condensed_Light',sans-serif] text-[50px] font-bold whitespace-pre">
          <output className="text-white">+ ¥50.0</output>
          <output className="text-[#e7a600]">- ¥583.5</output>
          <output className="text-white">- ¥633.5</output>
        </div>
      </div>

      <ul className="mt-[30px] flex min-h-0 flex-1 flex-col gap-[15px] overflow-hidden">
        {bills.map((bill) => (
          <BillRow key={bill.id} bill={bill} />
        ))}
      </ul>

      <button
        type="button"
        aria-label="关闭"
        className="absolute -top-[38px] -right-[37px] flex h-[75px] w-[75px] items-center justify-center rounded-full border-[3px] border-white bg-[#e7a600]"
      >
        <svg viewBox="0 0 36 36" className="h-9 w-9" stroke="#fff" strokeWidth="5" aria-hidden="true">
          <path d="M1 1L35 35M35 1L1 35" />
        </svg>
      </button>
    </div>
  );
}

/* ---------- System bar ---------- */

function NavBar() {
  return (
    <nav className="flex h-[132px] shrink-0 items-center justify-center bg-black">
      <button type="button" aria-label="返回" className="flex w-60 justify-center">
        <svg viewBox="0 0 52 52" className="h-[52px] w-[52px]" fill="none" stroke="#b2b2b2" strokeWidth="4" strokeLinejoin="round" aria-hidden="true">
          <path d="M44 3V49L6 26Z" />
        </svg>
      </button>
      <button type="button" aria-label="主屏幕" className="flex w-60 justify-center">
        <svg viewBox="0 0 52 52" className="h-[52px] w-[52px]" fill="none" stroke="#b2b2b2" strokeWidth="4" aria-hidden="true">
          <circle cx="26" cy="26" r="23" />
        </svg>
      </button>
      <button type="button" aria-label="最近任务" className="flex w-60 justify-center">
        <svg viewBox="0 0 52 52" className="h-[52px] w-[52px]" fill="none" stroke="#b2b2b2" strokeWidth="4" aria-hidden="true">
          <rect x="5" y="5" width="42" height="42" rx="2" />
        </svg>
      </button>
    </nav>
  );
}

export default function App() {
  return (
    <div className="flex min-h-screen flex-col bg-black">
      <main className="relative flex flex-1 flex-col overflow-hidden">
        <HomeScreen />
        <div className="absolute inset-0 p-[99px]">
          <BillDialog />
        </div>
      </main>
      <NavBar />
    </div>
  );
}
